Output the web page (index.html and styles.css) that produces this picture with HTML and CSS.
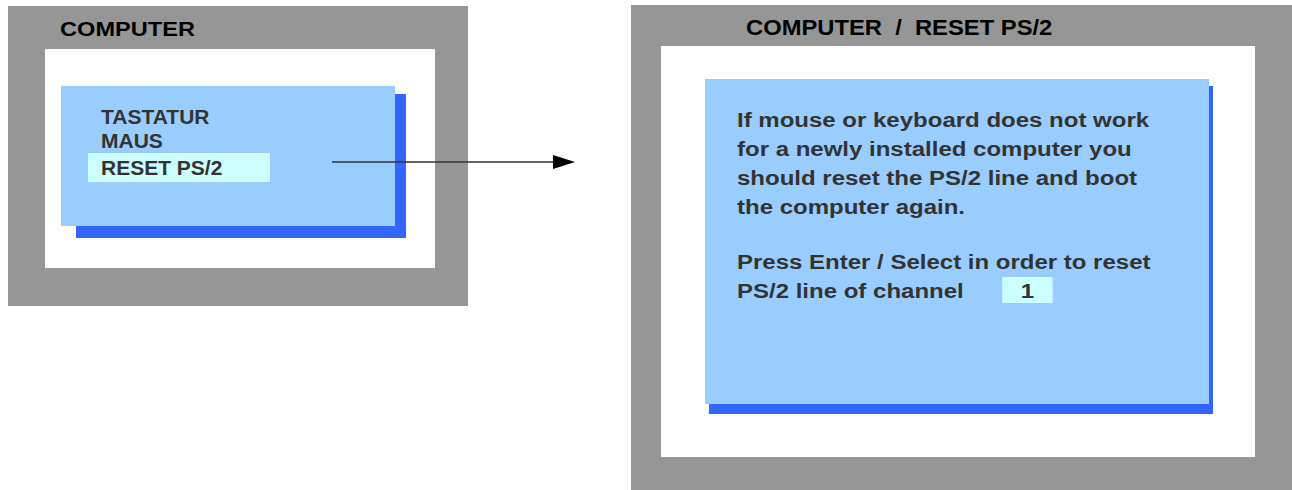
FILE: index.html
```html
<!DOCTYPE html>
<html lang="de">
<head>
  <meta charset="UTF-8">
  <title>Computer / Reset PS/2</title>
  <link rel="stylesheet" href="styles.css">
</head>
<body>

  <div class="panel panel-left">
    <div class="title title-left">COMPUTER</div>
    <div class="screen">
      <div class="menu">
        <div class="item">TASTATUR</div>
        <div class="item">MAUS</div>
        <div class="item selected">RESET PS/2</div>
      </div>
    </div>
  </div>

  <div class="panel panel-right">
    <div class="title title-right">COMPUTER  /  RESET PS/2</div>
    <div class="screen">
      <div class="info">
        <div class="info-text">
          <p>If mouse or keyboard does not work<br>
          for a newly installed computer you<br>
          should reset the PS/2 line and boot<br>
          the computer again.</p>
          <p class="second">Press Enter / Select in order to reset<br>
          PS/2 line of channel<span class="channel">1</span></p>
        </div>
      </div>
    </div>
  </div>

  <!-- Pfeil vom Menue zum Dialog -->
  <svg class="arrow" width="250" height="16" viewBox="0 0 250 16">
    <line x1="2" y1="8" x2="226" y2="8" stroke="#333" stroke-width="1.5"/>
    <polygon points="223,1 245,8 223,15" fill="#000"/>
  </svg>

</body>
</html>
```

FILE: styles.css
```css
body {
  margin: 0;
  padding: 0;
  position: relative;
  display: flex;
  align-items: flex-start;
  background-color: #fff;
  font-family: "Liberation Sans", Arial, sans-serif;
  font-weight: bold;
  color: #333;
}

.panel {
  background-color: #969696;
  box-sizing: border-box;
}

.title {
  color: #000;
  white-space: pre;
  transform-origin: left top;
}

.screen {
  background-color: #fff;
  box-sizing: border-box;
  isolation: isolate;
}

/* linkes Fenster */
.panel-left {
  width: 460px;
  height: 300px;
  margin: 6px 0 0 8px;
  padding: 11px 0 0 37px;
}

.title-left {
  font-size: 20px;
  line-height: 24px;
  height: 24px;
  margin: 0 0 8px 15px;
  transform: scaleX(1.18);
}

.panel-left .screen {
  width: 390px;
  height: 219px;
  padding: 37px 0 0 16px;
}

.menu {
  position: relative;
  width: 334px;
  height: 140px;
  box-sizing: border-box;
  padding-top: 19px;
  background-color: #99ccff;
}

.menu::before {
  content: "";
  position: absolute;
  left: 15px;
  top: 8px;
  right: -11px;
  bottom: -12px;
  background-color: #3366ff;
  z-index: -1;
}

.item {
  font-size: 21px;
  line-height: 24px;
  padding-left: 40px;
}

.item.selected {
  width: 182px;
  line-height: 29px;
  margin-left: 27px;
  padding-left: 13px;
  box-sizing: border-box;
  background-color: #ccffff;
}

/* rechtes Fenster */
.panel-right {
  width: 661px;
  height: 485px;
  margin: 5px 0 0 163px;
  padding: 10px 0 0 30px;
}

.title-right {
  font-size: 22px;
  line-height: 26px;
  height: 26px;
  margin: 0 0 5px 85px;
  transform: scaleX(1.08);
}

.panel-right .screen {
  width: 594px;
  height: 411px;
  padding: 33px 0 0 44px;
}

.info {
  position: relative;
  width: 504px;
  height: 325px;
  box-sizing: border-box;
  padding: 27px 0 0 32px;
  background-color: #99ccff;
}

.info::before {
  content: "";
  position: absolute;
  left: 4px;
  top: 7px;
  right: -4px;
  bottom: -10px;
  background-color: #3366ff;
  z-index: -1;
}

.info-text {
  font-size: 20px;
  line-height: 29px;
  transform: scaleX(1.2);
  transform-origin: left top;
}

.info-text p {
  margin: 0;
}

.info-text p.second {
  margin-top: 26px;
}

.channel {
  display: inline-block;
  vertical-align: top;
  width: 42px;
  height: 26px;
  margin-left: 32px;
  text-align: center;
  background-color: #ccffff;
}

.arrow {
  position: absolute;
  left: 330px;
  top: 154px;
}
```
